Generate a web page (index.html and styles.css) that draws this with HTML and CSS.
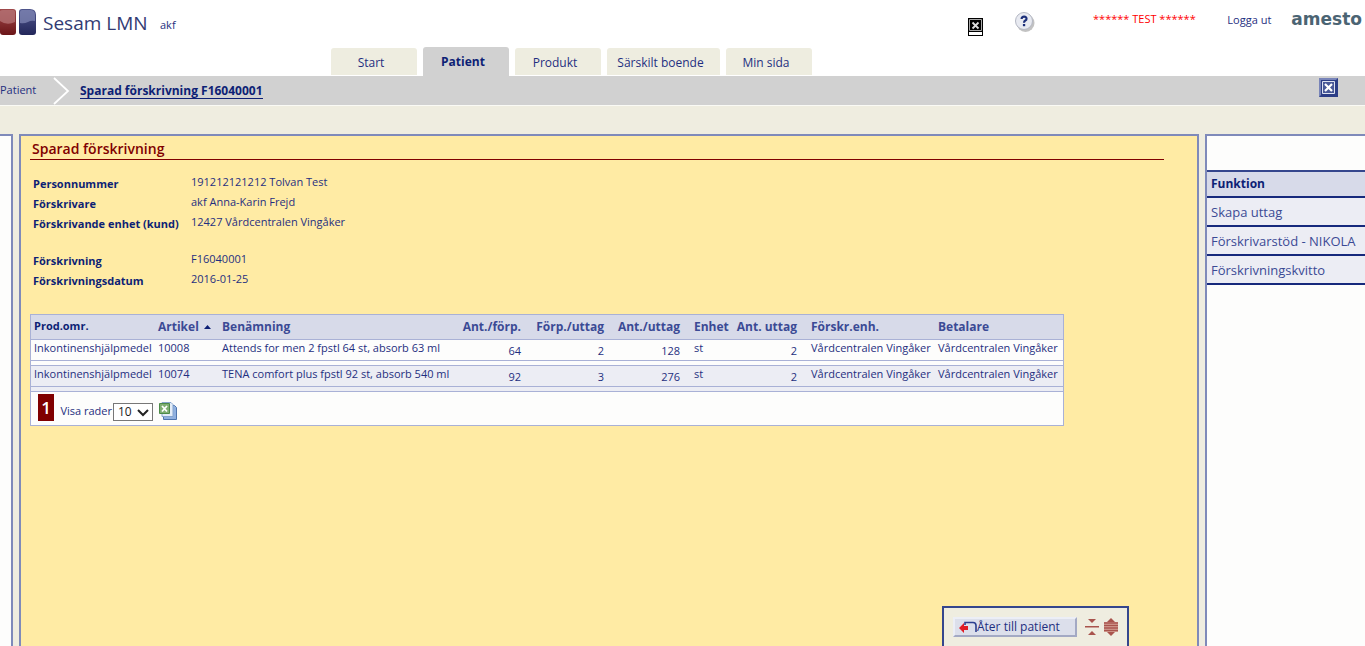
FILE: index.html
```html
<!DOCTYPE html>
<html lang="sv">
<head>
<meta charset="utf-8">
<title>Sesam LMN - Sparad förskrivning</title>
<link rel="stylesheet" href="styles.css">
</head>
<body>
<header class="top">
  <div class="brand">
    <svg class="brand-mark" width="36" height="28" viewBox="0 0 36 28" aria-hidden="true">
      <defs>
        <linearGradient id="red" x1="0" y1="0" x2="0" y2="1"><stop offset="0" stop-color="#a04a4c"/><stop offset="1" stop-color="#6b1518"/></linearGradient>
        <linearGradient id="blue" x1="0" y1="0" x2="0" y2="1"><stop offset="0" stop-color="#4f558c"/><stop offset="1" stop-color="#23275a"/></linearGradient>
      </defs>
      <path d="M0 1h13q3 0 3 3v20q0 3-3 3H3q-3 0-3-3z" fill="url(#red)"/>
      <path d="M0 3q1-1 3-1h10q2 0 2 2v10Q7 18 0 13z" fill="#b47274" opacity=".8"/>
      <path d="M19 4q0-3 3-3h8q6 0 6 6v17q0 3-3 3H22q-3 0-3-3z" fill="url(#blue)"/>
      <path d="M20 4q0-2 2-2h8q5 0 5 5v6q-4-1-7 1-4 2-8 1z" fill="#8087b4" opacity=".75"/>
    </svg>
    <span class="brand-name">Sesam LMN</span>
    <span class="user">akf</span>
  </div>
  <div class="tools">
    <button class="icon-btn" aria-label="Stäng fönster">
      <svg width="15" height="18" viewBox="0 0 15 18"><path d="M0 0h15v18H0z" fill="#000"/><path d="M1.500 1.500h12v11h-12z" fill="none" stroke="#aaa"/><path d="M1 14h13v3H1z" fill="#fff"/><path d="M4.500 4.500l6 6m0-6l-6 6" stroke="#ddd" stroke-width="1.800"/></svg>
    </button>
    <button class="icon-btn help" aria-label="Hjälp">
      <svg width="22" height="22" viewBox="0 0 22 22"><circle cx="11.500" cy="12" r="9" fill="#999" opacity=".6"/><circle cx="10" cy="10" r="8.500" fill="#e8eaf1" stroke="#b4b8c4"/><path d="M7.600 8q0-2.300 2.500-2.300T12.500 7.800q0 1.200-1.200 1.800T10 11.700" fill="none" stroke="#1c2f7a" stroke-width="2.200"/><path d="M8.900 13h2.300v2.200H8.900z" fill="#1c2f7a"/></svg>
    </button>
    <span class="env">****** TEST ******</span>
    <a class="logout" href="#">Logga ut</a>
    <span class="vendor">amesto</span>
  </div>
</header>
<nav class="tabs">
  <a class="tab" href="#">Start</a>
  <a class="tab active" href="#">Patient</a>
  <a class="tab" href="#">Produkt</a>
  <a class="tab wide" href="#">Särskilt boende</a>
  <a class="tab" href="#">Min sida</a>
</nav>
<div class="crumbs">
  <a class="crumb" href="#">Patient</a>
  <svg class="chevron" width="17" height="29" viewBox="0 0 17 29" aria-hidden="true"><path d="M1 2l14 13L1 28" fill="none" stroke="#fff" stroke-width="1.800"/></svg>
  <a class="crumb current" href="#">Sparad förskrivning F16040001</a>
  <button class="icon-btn close" aria-label="Stäng">
    <svg width="19" height="19" viewBox="0 0 19 19"><path d="M0 0h19v19H0z" fill="#2c3d86"/><path d="M0 0h19l-2 2H2v15l-2 2z" fill="#7884b8"/><path d="M3.500 3.500h12v12h-12z" fill="#4a5998" stroke="#dfe3f0"/><path d="M6 6l7 7m0-7l-7 7" stroke="#fff" stroke-width="2.200"/></svg>
  </button>
</div>
<div class="workspace">
  <aside class="left-panel"></aside>
  <main class="main-panel">
    <h1 class="title">Sparad förskrivning</h1>
    <dl class="facts">
      <dt>Personnummer</dt><dd>191212121212 Tolvan Test</dd>
      <dt>Förskrivare</dt><dd>akf Anna-Karin Frejd</dd>
      <dt>Förskrivande enhet (kund)</dt><dd>12427 Vårdcentralen Vingåker</dd>
    </dl>
    <dl class="facts">
      <dt>Förskrivning</dt><dd>F16040001</dd>
      <dt>Förskrivningsdatum</dt><dd>2016-01-25</dd>
    </dl>
    <div class="list">
      <table class="grid">
        <colgroup><col class="c-area"><col class="c-article"><col class="c-name"><col class="c-pack"><col class="c-packs"><col class="c-qty"><col class="c-unit"><col class="c-count"><col class="c-org"><col class="c-payer"></colgroup>
        <thead>
          <tr><th class="plain">Prod.omr.</th><th>Artikel <svg class="sort" width="7" height="4" viewBox="0 0 7 4"><path d="M0 4l3.500-4L7 4z" fill="#0d1f75"/></svg></th><th>Benämning</th><th class="num">Ant./förp.</th><th class="num">Förp./uttag</th><th class="num">Ant./uttag</th><th class="inset">Enhet</th><th class="num">Ant. uttag</th><th class="inset">Förskr.enh.</th><th>Betalare</th></tr>
        </thead>
        <tbody>
          <tr><td>Inkontinenshjälpmedel</td><td>10008</td><td>Attends for men 2 fpstl 64 st, absorb 63 ml</td><td class="num">64</td><td class="num">2</td><td class="num">128</td><td class="inset">st</td><td class="num">2</td><td class="inset">Vårdcentralen Vingåker</td><td>Vårdcentralen Vingåker</td></tr>
          <tr class="spacer"><td colspan="10"></td></tr>
          <tr class="alt"><td>Inkontinenshjälpmedel</td><td>10074</td><td>TENA comfort plus fpstl 92 st, absorb 540 ml</td><td class="num">92</td><td class="num">3</td><td class="num">276</td><td class="inset">st</td><td class="num">2</td><td class="inset">Vårdcentralen Vingåker</td><td>Vårdcentralen Vingåker</td></tr>
          <tr class="spacer alt"><td colspan="10"></td></tr>
        </tbody>
      </table>
      <div class="pager">
        <span class="page">1</span>
        <label class="rows-label" for="rows">Visa rader</label>
        <span class="select-wrap">
          <select id="rows" class="rows"><option>10</option><option>25</option><option>50</option></select>
          <svg class="arrow" width="12" height="8" viewBox="0 0 12 8" aria-hidden="true"><path d="M1 1l5 5 5-5" fill="none" stroke="#222" stroke-width="2"/></svg>
        </span>
        <button class="icon-btn excel" aria-label="Exportera till Excel">
          <svg width="18" height="18" viewBox="0 0 18 18"><path d="M4.500 3.500h11l2 2v12h-13z" fill="#8fb0e0" stroke="#4e74ad"/><path d="M3 .5h9l2 2v12H3z" fill="#e4edf8" stroke="#86a4ce"/><path d="M.5 1.500h10v10H.5z" fill="#7fae72" stroke="#4d8a48"/><path d="M3 4l5 5.500M8 4L3 9.500" stroke="#fff" stroke-width="1.800"/></svg>
        </button>
      </div>
    </div>
    <div class="actions">
      <button class="back"><svg width="18" height="12" viewBox="0 0 18 12" aria-hidden="true"><path d="M6 4V1.500h8q3 0 3 3V11" fill="none" stroke="#2c3f8f" stroke-width="1.600"/><path d="M0 7l5-5v3h4v4H5v3z" fill="#e01b24"/></svg>Åter till patient</button>
      <button class="icon-btn" aria-label="Fäll ihop"><svg width="14" height="16" viewBox="0 0 14 16"><path d="M3 0h8L7 4zM0 7h14v1.500H0zM3 16h8l-4-4z" fill="#a9544d"/></svg></button>
      <button class="icon-btn" aria-label="Fäll ut"><svg width="14" height="18" viewBox="0 0 14 18"><path d="M3 4l4-4 4 4zM3 14l4 4 4-4z" fill="#a9544d"/><path d="M0 4h14v10H0z" fill="#d9a79a"/><path d="M0 5h14M0 7.500h14M0 10h14M0 12.500h14" stroke="#a9544d" stroke-width="1.300"/></svg></button>
    </div>
  </main>
  <aside class="right-panel">
    <h2 class="side-title">Funktion</h2>
    <a class="side-link" href="#">Skapa uttag</a>
    <a class="side-link" href="#">Förskrivarstöd - NIKOLA</a>
    <a class="side-link" href="#">Förskrivningskvitto</a>
  </aside>
</div>
</body>
</html>
```
FILE: styles.css
```css
* { box-sizing: border-box; }
body {
  margin: 0;
  height: 100vh;
  display: flex;
  flex-direction: column;
  overflow: hidden;
  background: #efede0;
  color: #1f2f80;
  font: 11px/16px "Trebuchet MS", "Open Sans", "Noto Sans", sans-serif;
}
a { color: inherit; text-decoration: none; }
button { font: inherit; color: inherit; }
svg { display: block; }
.icon-btn { padding: 0; border: 0; background: none; }

.top {
  display: flex;
  justify-content: space-between;
  height: 47px;
  padding-top: 8px;
  background: #fff;
}
.brand { display: flex; align-items: flex-start; }
.brand-name { width: 106px; margin-left: 7px; font-size: 19px; font-weight: 500; line-height: 30px; color: #323b73; white-space: nowrap; }
.user { margin: 9px 0 0 11px; }
.tools { display: flex; align-items: flex-start; padding: 3px 3px 0 0; }
.tools .icon-btn { margin-top: 7px; }
.tools .help { margin: 0 0 0 31px; }
.env { width: 104px; margin-left: 56px; color: #f00; white-space: nowrap; text-align: center; }
.logout { width: 44px; margin: 1px 0 0 31px; white-space: nowrap; }
.vendor { margin-left: 20px; color: #4b6473; font: bold 17px/16px "DejaVu Sans", sans-serif; }

.tabs {
  display: flex;
  align-items: flex-end;
  gap: 6px;
  height: 29px;
  padding-left: 331px;
  background: #fff;
}
.tab {
  width: 86px;
  height: 27px;
  margin-bottom: 1px;
  padding-right: 6px;
  border-radius: 3px 3px 0 0;
  background: #eeede0;
  font-size: 12px;
  font-weight: 500;
  line-height: 29px;
  text-align: center;
  white-space: nowrap;
}
.tab.active { height: 29px; margin-bottom: 0; background: #d1d1d1; color: #0d1f75; font-weight: 700; }
.tab.wide { width: 113px; }

.crumbs {
  display: flex;
  align-items: center;
  height: 30px;
  background: #d1d1d1;
  border-bottom: 1px solid #fafaf5;
}
.crumb { width: 37px; padding-bottom: 1px; }
.chevron { margin-left: 16px; }
.crumb.current {
  width: auto;
  margin-left: 10px;
  padding: 0;
  border-bottom: 1px solid #0d1f75;
  color: #0d1f75;
  font-size: 12px;
  font-weight: 700;
  line-height: 15px;
}
.close { margin: 0 27px 7px auto; }

.workspace { flex: 1; display: flex; min-height: 0; padding-top: 28px; }
.left-panel, .main-panel, .right-panel { border: 2px solid #7f8aba; border-bottom: 0; }
.left-panel { width: 13px; border-left: 0; background: #fdfdfc; }
.main-panel {
  flex: 1;
  display: flex;
  flex-direction: column;
  margin: 0 6px;
  padding: 3px 9px 0;
  background: #ffeba4;
}
.right-panel { width: 160px; padding-top: 34px; border-right: 0; background: #fdfdfc; }

.title {
  margin: 0 24px 14px 0;
  padding-left: 2px;
  border-bottom: 1px solid #800000;
  color: #800000;
  font-size: 14px;
  font-weight: 600;
  line-height: 20px;
}
.facts {
  display: grid;
  grid-template-columns: 158px 1fr;
  grid-auto-rows: 20px;
  margin: 0 0 17px 3px;
}
.facts dt { padding-top: 2px; color: #0d1f75; font-weight: 700; white-space: nowrap; }
.facts dd { margin: 0; }

.list { align-self: flex-start; margin-top: 6px; border: 1px solid #a9b1d6; background: #fdfdfc; }
.grid { width: 1032px; border-collapse: collapse; table-layout: fixed; }
.c-area { width: 124px; }
.c-article { width: 64px; }
.c-name { width: 237px; }
.c-pack { width: 69px; }
.c-packs { width: 83px; }
.c-qty { width: 76px; }
.c-unit { width: 48px; }
.c-count { width: 69px; }
.c-org { width: 134px; }
.c-payer { width: 128px; }
.grid th, .grid td { height: 21px; padding: 0 3px; vertical-align: top; text-align: left; white-space: nowrap; }
.grid tr { border-bottom: 1px solid #a9b1d6; }
.grid th { height: 24px; padding-top: 4px; background: #d7dae9; color: #3b4a95; font-size: 12px; font-weight: 700; }
.grid th.plain { padding-top: 3px; color: #0d1f75; font-size: 11px; }
.grid .num { padding-right: 4px; text-align: right; }
.grid td.num { padding-top: 3px; }
.grid .inset { padding-left: 10px; }
.grid .alt { background: #ecedf4; }
.grid .spacer td { height: 5px; padding: 0; }
.sort { display: inline-block; margin: 0 0 2px 2px; }

.pager { display: flex; align-items: center; height: 33px; padding-left: 7px; }
.page { width: 16px; margin-bottom: 1px; background: #800000; color: #fff; font-size: 17px; font-weight: 600; line-height: 27px; text-align: center; }
.rows-label { width: 52px; margin: 6px 0 0 6px; text-align: right; white-space: nowrap; }
.select-wrap { position: relative; margin: 7px 0 0 1px; }
.rows {
  display: block;
  width: 40px;
  height: 18px;
  padding: 0 4px;
  border: 1px solid #777;
  border-radius: 0;
  appearance: none;
  background: #fff;
  color: #222;
  font: inherit;
  font-size: 12px;
  line-height: 16px;
}
.arrow { position: absolute; right: 4px; top: 6px; pointer-events: none; }
.excel { margin: 6px 0 0 6px; }

.actions {
  display: flex;
  align-items: center;
  gap: 5px;
  width: 187px;
  height: 40px;
  margin: auto 59px 0 auto;
  padding-left: 9px;
  border: 2px solid #35468d;
  border-bottom: 0;
  background: #efede0;
}
.back {
  display: flex;
  align-items: center;
  width: 124px;
  height: 20px;
  margin-right: 3px;
  padding: 0 4px;
  border: 2px solid;
  border-color: #eceef6 #a3a9c4 #a3a9c4 #eceef6;
  background: #dcdfeb;
  font-size: 12px;
  white-space: nowrap;
}

.side-title, .side-link {
  display: block;
  height: 29px;
  margin: 0;
  padding-left: 4px;
  border-bottom: 2px solid #16297c;
  background: #ecedf4;
  color: #3b4a95;
  font-size: 13px;
  font-weight: 500;
  line-height: 28px;
  white-space: nowrap;
}
.side-title { height: 28px; border-top: 2px solid #35468d; background: #d7dae9; color: #0d1f75; font-size: 12px; font-weight: 700; line-height: 24px; }
```
